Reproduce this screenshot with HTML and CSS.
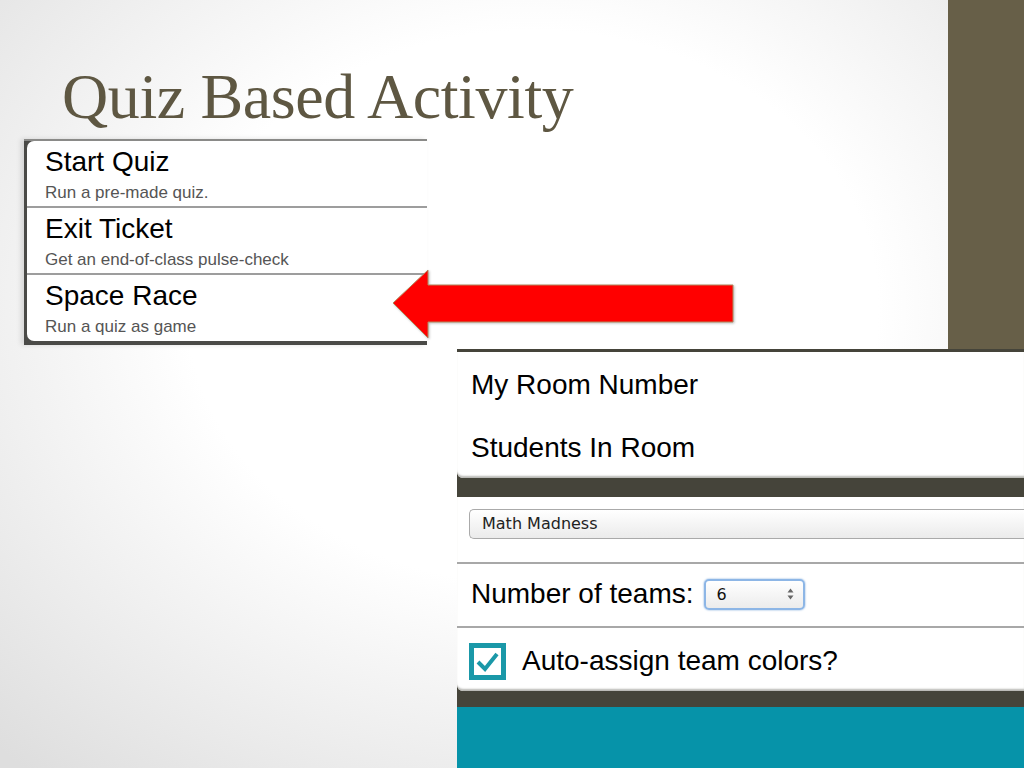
FILE: index.html
```html
<!DOCTYPE html>
<html lang="en">
<head>
    <meta charset="UTF-8">
    <title>Quiz Based Activity</title>
    <link rel="stylesheet" href="styles.css">
</head>
<body>

<div class="slide">
    <h1 class="title">Quiz Based Activity</h1>

    <div class="menu">
        <ul class="menu-list">
            <li class="menu-item">
                <h2>Start Quiz</h2>
                <p>Run a pre-made quiz.</p>
            </li>
            <li class="menu-item">
                <h2>Exit Ticket</h2>
                <p>Get an end-of-class pulse-check</p>
            </li>
            <li class="menu-item">
                <h2>Space Race</h2>
                <p>Run a quiz as game</p>
            </li>
        </ul>
    </div>

    <!-- flecha que apunta a Space Race -->
    <svg class="arrow" width="345" height="74" viewBox="0 0 345 74">
        <polygon points="1,36 36,3 36,18 341,18 341,55 36,55 36,71" fill="#ff0000" stroke="#b3875c" stroke-width="1"/>
    </svg>

    <div class="settings">
        <div class="card room-card">
            <div class="room-row">My Room Number</div>
            <div class="room-row">Students In Room</div>
        </div>

        <div class="card options-card">
            <div class="opt-row quiz-row">
                <div class="select-box">Math Madness</div>
            </div>
            <div class="opt-row teams-row">
                <span class="label">Number of teams:</span>
                <span class="num-select">
                    <span>6</span>
                    <svg width="7" height="12" viewBox="0 0 7 12">
                        <polygon points="3.5,0.5 6.5,4.5 0.5,4.5" fill="#666"/>
                        <polygon points="3.5,11.5 6.5,7.5 0.5,7.5" fill="#666"/>
                    </svg>
                </span>
            </div>
            <div class="opt-row check-row">
                <span class="checkbox">
                    <svg width="27" height="27" viewBox="0 0 27 27">
                        <path d="M4 14 L11 21 L23 6" fill="none" stroke="#1a98a8" stroke-width="4"/>
                    </svg>
                </span>
                <span class="label">Auto-assign team colors?</span>
            </div>
        </div>

        <div class="teal-bar"></div>
    </div>
</div>

</body>
</html>
```

FILE: styles.css
```css
html, body {
    margin: 0;
    padding: 0;
    width: 1024px;
    height: 768px;
    overflow: hidden;
}
.slide {
    position: relative;
    width: 1024px;
    height: 768px;
    overflow: hidden;
    background:
        linear-gradient(#675f48, #675f48) right top / 76px 349px no-repeat,
        radial-gradient(ellipse 75% 80% at 52% 40%, #ffffff 45%, #dedede 100%);
    font-family: "Liberation Sans", Arial, sans-serif;
    display: flow-root;
}
.title {
    margin: 65px 0 0 62px;
    font-family: "Liberation Serif", "Times New Roman", serif;
    font-weight: normal;
    font-size: 64px;
    line-height: 64px;
    letter-spacing: -0.4px;
    color: #5e5742;
}

/* menu de actividades */
.menu {
    margin: 10px 0 0 24px;
    width: 403px;
    padding: 2px 0 4px 3px;
    background: linear-gradient(#8a8a88 0, #8a8a88 2px, #4a4a47 2px);
    box-shadow: -3px 0 5px rgba(0, 0, 0, 0.12);
    box-sizing: border-box;
}
.menu-list {
    list-style: none;
    margin: 0;
    padding: 0;
    background: white;
    border-radius: 7px 0 0 7px;
}
.menu-item {
    height: 65px;
    padding: 6px 0 0 18px;
    box-sizing: border-box;
}
.menu-item + .menu-item {
    height: 67px;
    border-top: 2px solid #9d9d9d;
}
.menu-item:last-child {
    height: 68px;
}
.menu-item h2 {
    margin: 0;
    font-size: 28px;
    line-height: 30px;
    font-weight: normal;
    color: #000;
}
.menu-item p {
    margin: 6px 0 0;
    font-size: 17px;
    line-height: 20px;
    color: #555;
}

.arrow {
    position: absolute;
    left: 392px;
    top: 267px;
    filter: drop-shadow(1px 1px 1px rgba(0, 0, 0, 0.25));
}

/* panel de ajustes */
.settings {
    margin: 4px 0 0 457px;
    width: 567px;
    padding-top: 3px;
    background: #45443a;
}
.card {
    background: white;
    border-radius: 0 0 0 6px;
    box-shadow: inset 0 -3px 2px -1px #b8b8b4;
    box-sizing: border-box;
}
.room-card {
    height: 126px;
    padding: 18px 0 0 14px;
    margin-bottom: 19px;
}
.room-row {
    font-size: 28px;
    line-height: 30px;
    color: #000;
    margin-bottom: 33px;
}
.options-card {
    height: 194px;
    margin-bottom: 16px;
}
.opt-row {
    display: flex;
    align-items: center;
    box-sizing: border-box;
}
.opt-row .label {
    font-size: 28px;
    line-height: 30px;
    color: #000;
}
.quiz-row {
    height: 67px;
    padding: 12px 0 0 12px;
    align-items: flex-start;
    border-bottom: 2px solid #a8a8a8;
}
.select-box {
    flex: 1;
    height: 30px;
    padding-left: 12px;
    border: 1px solid #aaa;
    border-right: none;
    border-radius: 5px 0 0 5px;
    background: linear-gradient(#ffffff, #ebebeb);
    font-family: "DejaVu Sans", sans-serif;
    font-size: 16px;
    line-height: 28px;
    color: #222;
    box-sizing: border-box;
}
.teams-row {
    height: 64px;
    padding: 0 0 2px 14px;
    gap: 10px;
    border-bottom: 2px solid #a8a8a8;
}
.num-select {
    display: flex;
    align-items: center;
    justify-content: space-between;
    width: 101px;
    height: 31px;
    padding: 0 9px 0 11px;
    border: 2px solid #8db6e6;
    border-radius: 5px;
    box-shadow: 0 0 2px #6f9fd6;
    background: linear-gradient(#ffffff, #ececec);
    font-family: "DejaVu Sans", sans-serif;
    font-size: 16px;
    color: #111;
    box-sizing: border-box;
}
.check-row {
    height: 63px;
    padding: 3px 0 0 12px;
    gap: 16px;
}
.checkbox {
    display: flex;
    align-items: center;
    justify-content: center;
    width: 37px;
    height: 37px;
    border: 5px solid #1a98a8;
    background: white;
    box-sizing: border-box;
}
.teal-bar {
    height: 61px;
    background: #0693a9;
}
```
